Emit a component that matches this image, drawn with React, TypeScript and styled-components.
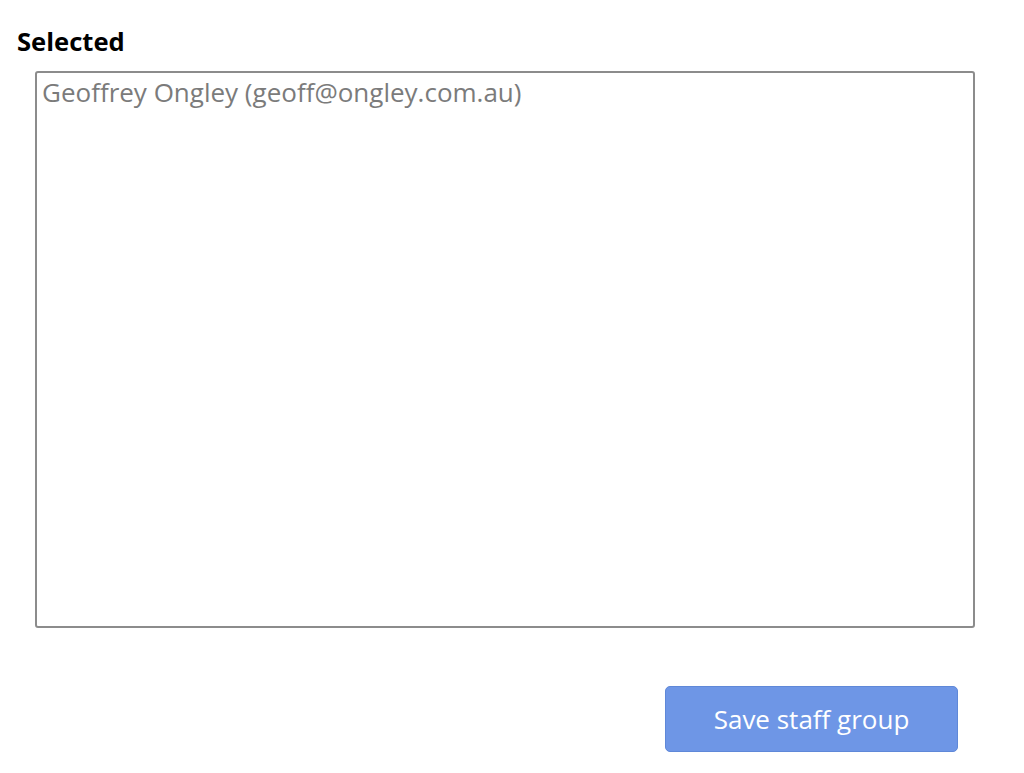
import React from 'react';
import styled, { createGlobalStyle } from 'styled-components';

const GlobalStyle = createGlobalStyle`
  body {
    margin: 0;
    background: #ffffff;
    font-family: "Open Sans", "Liberation Sans", sans-serif;
  }
`;

const selected = ['Geoffrey Ongley (geoff@ongley.com.au)'];

const App: React.FC = () => {
  return (
    <>
      <GlobalStyle />
      <Page>
        <Label>Selected</Label>
        <ListBox>
          {selected.map((s) => (
            <Option key={s}>{s}</Option>
          ))}
        </ListBox>
        <Footer>
          <SaveBtn>Save staff group</SaveBtn>
        </Footer>
      </Page>
    </>
  );
};

export default App;

const Page = styled.div`
  width: 1024px;
  padding: 26px 0 0 0;
  box-sizing: border-box;
`;

const Label = styled.div`
  margin-left: 17px;
  font-size: 25.6px;
  font-weight: 700;
  line-height: 32px;
  color: #000000;
`;

const ListBox = styled.div`
  margin: 13px 0 0 35px;
  width: 940px;
  height: 557px;
  box-sizing: border-box;
  border: 2px solid #8c8c8c;
  border-radius: 3px;
  padding: 3px 5px;
`;

const Option = styled.div`
  font-size: 26px;
  line-height: 32px;
  color: #7b7b7b;
`;

const Footer = styled.div`
  display: flex;
  justify-content: flex-end;
  width: 958px;
  margin-top: 58px;
`;

const SaveBtn = styled.button`
  width: 293px;
  height: 66px;
  border: 1px solid #5f88d8;
  border-radius: 5px;
  background-color: #6e96e6;
  color: #ffffff;
  font-family: "Open Sans", "Liberation Sans", sans-serif;
  font-size: 26px;
`;
